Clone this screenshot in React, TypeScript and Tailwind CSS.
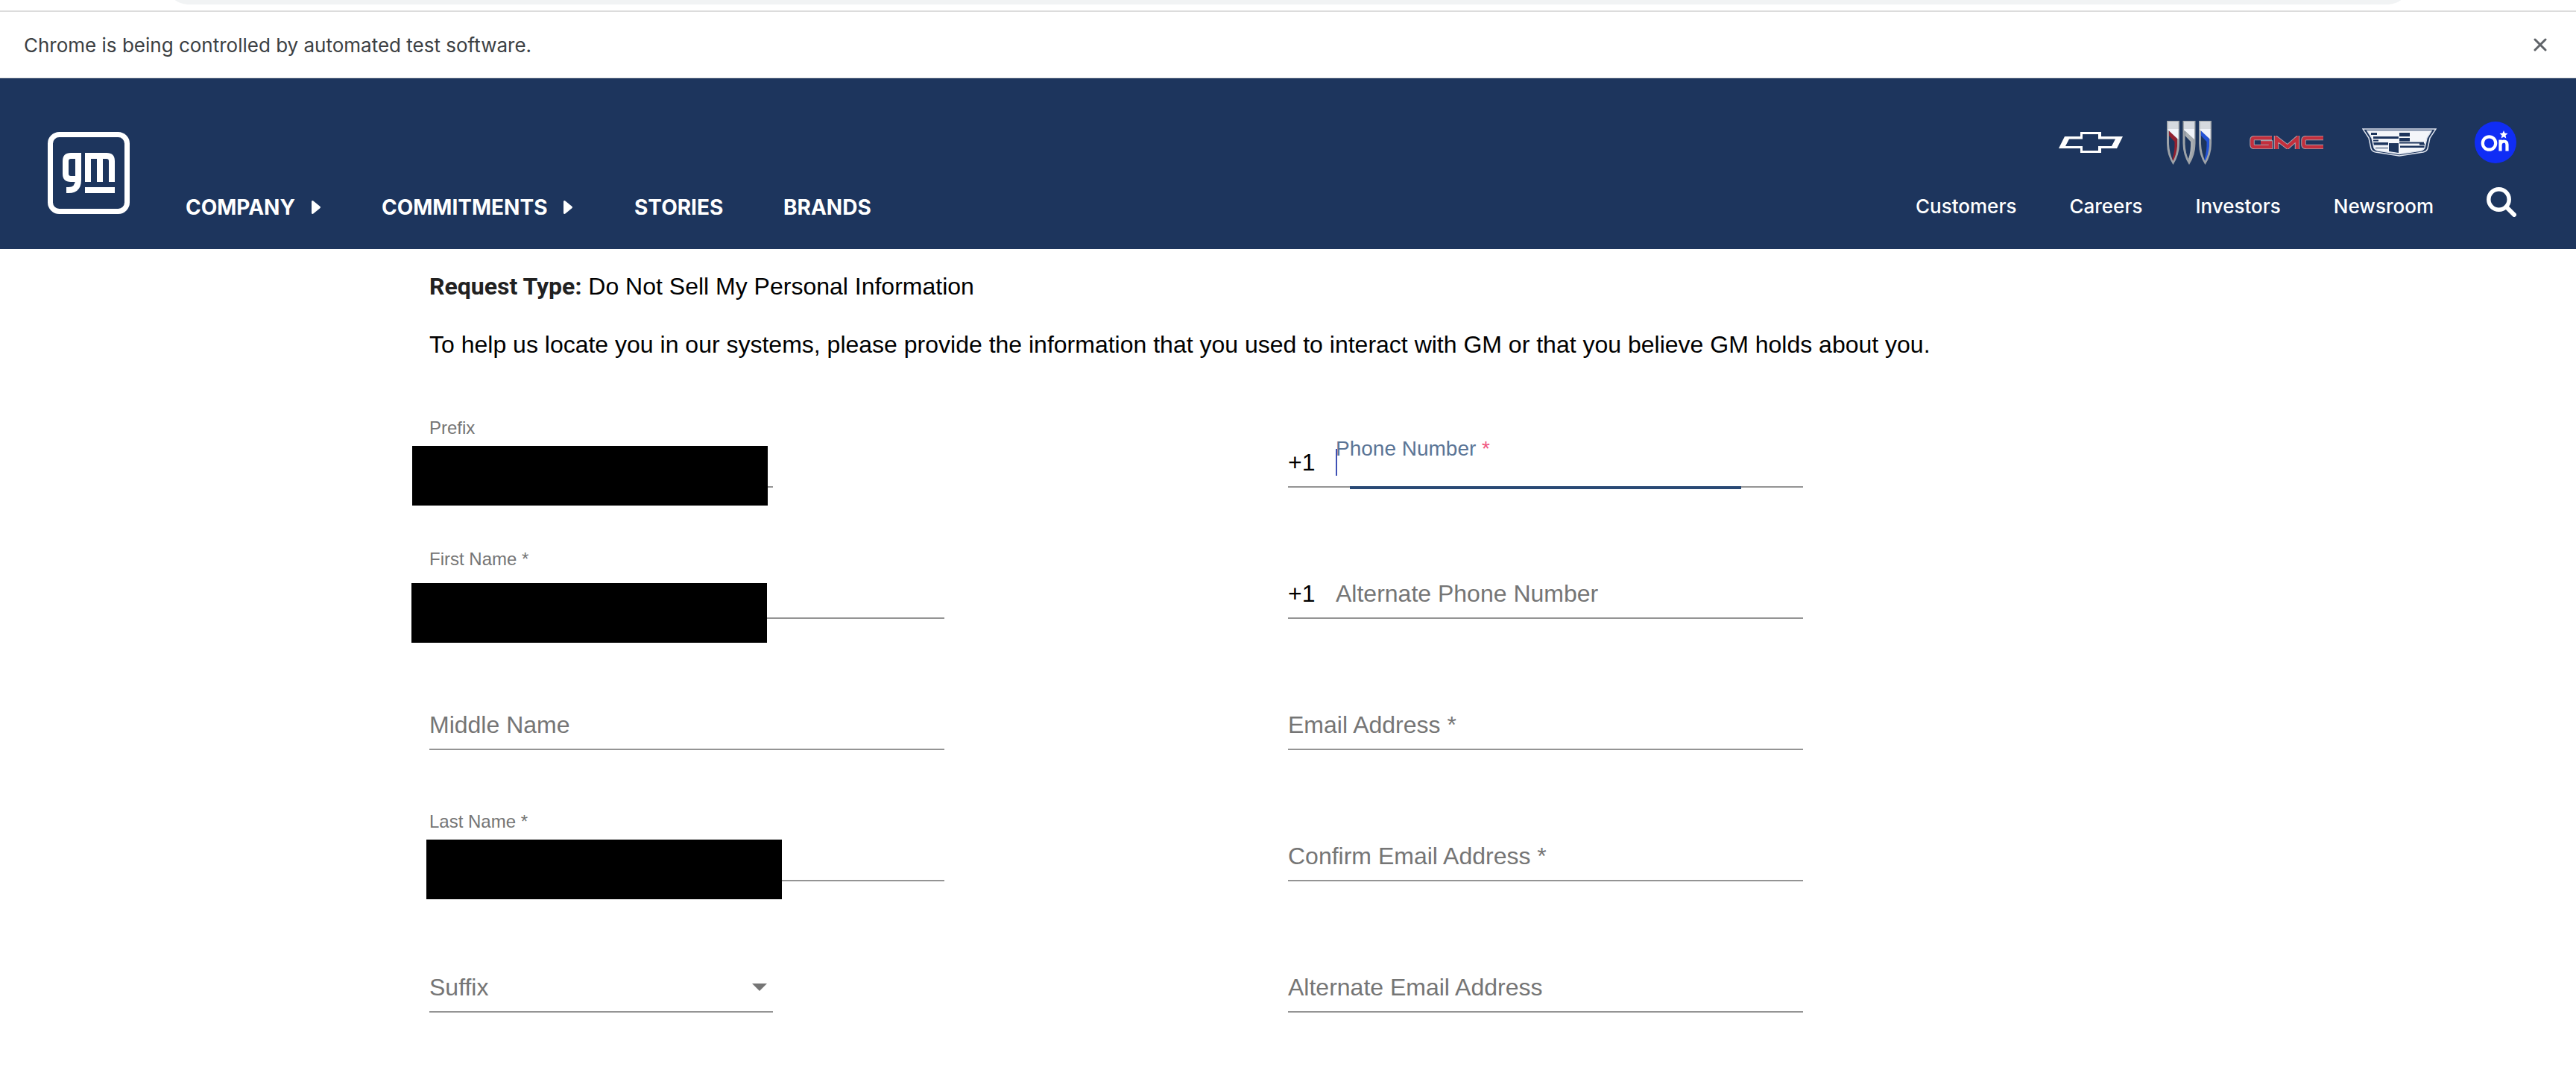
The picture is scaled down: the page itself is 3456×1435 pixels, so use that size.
import React from "react";

const brandNav = ["Customers", "Careers", "Investors", "Newsroom"];

function GmLogo() {
  return (
    <svg viewBox="0 0 110 110" className="h-[110px] w-[110px]" fill="none" stroke="#fff" aria-hidden="true">
      <rect x="3.5" y="3.5" width="103" height="103" rx="12" strokeWidth="7" />
      <path d="M45 32H31q-7 0-7 7V56q0 7 7 7H41" strokeWidth="8" />
      <path d="M41 28V64q0 14-13 14H25" strokeWidth="8" />
      <path d="M54 67V32H79q7 0 7 7V67M70 32V67" strokeWidth="8" />
      <path d="M50 78H90" strokeWidth="8" />
    </svg>
  );
}

function ChevroletLogo() {
  return (
    <svg viewBox="0 0 86 28" className="h-7 w-[86px]" aria-hidden="true">
      <path fill="#fff" fillRule="evenodd" d="M29 0H57V6H86L78 22H57V28H29V22H0L8 6H29ZM32 3V9.500H14L9 19H32V25H53V19H71L76 9.500H53V3Z" />
    </svg>
  );
}

function Shield({ x, color }: { x: number; color: string }) {
  return (
    <g transform={`translate(${x} 0)`}>
      <path d="M0 0H17V30Q17 46 8.500 59Q0 46 0 30Z" fill="#9ea3a8" />
      <path d="M1.500 1H15.500V12H1.500Z" fill="#d5d9df" />
      <path d="M1.500 11H15.500V25L2 13Z" fill="#f1f4fa" />
      <path d="M3 14L12 24V32Q12 44 8 53Q3.500 43 3 31Z" fill="#1d355d" />
      <path d="M3 13.500L14 24V34Q13 45 8.500 54L7.500 51Q11 41 10.500 28L3 20Z" fill={color} />
    </g>
  );
}

function BuickLogo() {
  return (
    <svg viewBox="0 0 60 59" className="h-[59px] w-[60px]" aria-hidden="true">
      <Shield x={0} color="#92202f" />
      <Shield x={21.5} color="#a9aeb2" />
      <Shield x={43} color="#2453d6" />
    </svg>
  );
}

function GmcLogo() {
  const d = "M30 3H7Q3.500 3 3.500 6V12Q3.500 15 7 15H28V9.500H15M36 18V3.500L51 15L64 3.500V18M99 3H77Q72.500 3 72.500 6V12Q72.500 15 77 15H99";
  return (
    <svg viewBox="0 0 100 18" className="h-[18px] w-[100px]" fill="none" aria-hidden="true">
      <path d={d} stroke="#a9a1ab" strokeWidth="6.500" />
      <path d={d} stroke="#c32f3d" strokeWidth="4.500" />
    </svg>
  );
}

function CadillacLogo() {
  return (
    <svg viewBox="0 0 100 38" className="h-[38px] w-[100px]" aria-hidden="true">
      <path d="M1 1H99L91 13L88 27Q87 31 82 32L50 37L18 32Q13 31 12 27L9 13Z" fill="#1d355d" stroke="#dfe4ee" strokeWidth="1.500" />
      <path d="M7 3.500H93L87 13L84 26Q83 29 79 30L50 34.500L21 30Q17 29 16 26L13 13Z" fill="#f4f6fa" />
      <g fill="#1d355d">
        <path d="M12 6H20V9H12ZM50 6H64V11H50ZM15 11H49V14H15ZM15 15.500H22V17.500H15ZM50 13H64V17.500H50Z" />
        <path d="M15 19H35V22.500H15ZM36 20H49V33L36 31ZM50 18.500H83V20.500H50ZM77 20.500H84V22.500H77ZM51 23.500H84V26H51ZM18 26H35V27H18Z" />
      </g>
      <path d="M7 3.500H93L87 13L84 26Q83 29 79 30L50 34.500L21 30Q17 29 16 26L13 13Z" fill="none" stroke="#dfe4ee" strokeWidth="1.500" />
    </svg>
  );
}

function OnStarLogo() {
  return (
    <svg viewBox="0 0 56 56" className="h-14 w-14" aria-hidden="true">
      <circle cx="28" cy="28" r="28" fill="#102df5" />
      <circle cx="19.500" cy="29" r="8.700" fill="none" stroke="#fff" strokeWidth="4.200" />
      <path d="M34.500 39.500V24.500M34.500 31Q35 26.500 39.300 26.500Q43.500 26.500 43.500 31V39.500" fill="none" stroke="#fff" strokeWidth="4.200" />
      <path d="M39 12L40.500 15.500L44.500 16L41.500 18.500L42.300 22.500L39 20.500L35.700 22.500L36.500 18.500L33.500 16L37.500 15.500Z" fill="#fff" />
    </svg>
  );
}

function Arrow() {
  return (
    <svg viewBox="0 0 12 18" className="h-[18px] w-3" aria-hidden="true">
      <path d="M0 1Q1-1 3 1L11 7.500Q13 9 11 10.500L3 17Q1 19 0 17Z" fill="#fff" />
    </svg>
  );
}

type FieldProps = {
  id: string;
  label: string;
  filled?: boolean;
  select?: boolean;
  prefix?: string;
  focused?: boolean;
  mask?: string;
};

function Field({ id, label, filled, select, prefix, focused, mask }: FieldProps) {
  const control = "h-full min-w-0 flex-1 appearance-none bg-transparent text-[32px] text-black outline-none";
  return (
    <div className={select ? "relative flex h-24 w-2/5 flex-col" : "relative flex h-24 w-3/5 flex-col"}>
      {filled && (
        <label htmlFor={id} className="pt-0.5 text-2xl leading-7 text-[#757575]">
          {label}
        </label>
      )}
      <div className="relative mt-auto flex h-16 items-end border-b-2 border-[#949494]">
        {prefix && <span className="w-16 pb-3.5 text-[32px] leading-9">{prefix}</span>}
        {select ? (
          <select id={id} className={control} defaultValue="">
            <option value="" />
          </select>
        ) : (
          <input id={id} type="text" className={control} />
        )}
        {!filled && !focused && (
          <label
            htmlFor={id}
            className={
              prefix
                ? "absolute bottom-3.5 left-16 text-[32px] leading-9 text-[#757575]"
                : "absolute bottom-3.5 left-0 text-[32px] leading-9 text-[#757575]"
            }
          >
            {label}
          </label>
        )}
        {focused && (
          <>
            <label htmlFor={id} className="absolute bottom-[34px] left-16 text-[28px] leading-8 text-[#5b7596]">
              {label} <span className="text-[#f0557f]">*</span>
            </label>
            <span className="absolute bottom-3.5 left-16 h-9 w-0.5 bg-[#3f51b5]" />
            <span className="absolute -bottom-1 left-[12%] h-1 w-[76%] bg-[#2a4a75]" />
          </>
        )}
        {select && !filled && (
          <svg viewBox="0 0 20 10" className="pointer-events-none absolute right-2 bottom-[27px] h-2.5 w-5" aria-hidden="true">
            <path d="M0 0H20L10 10Z" fill="#757575" />
          </svg>
        )}
      </div>
      {mask && <div className={mask} />}
    </div>
  );
}

export default function App() {
  return (
    <div className="min-h-screen bg-white font-['Liberation_Sans',Arial,sans-serif] text-black">
      <div className="flex h-4 flex-col border-b-2 border-[#dcdcdc]">
        <div className="flex h-1.5 items-end overflow-hidden px-[224px]">
          <div className="h-14 flex-1 rounded-full bg-[#f1f3f4]" />
        </div>
      </div>
      <div className="flex h-[89px] items-center justify-between border-b border-[#dcdcdc] pr-[39px] pl-8">
        <p className="font-['Inter',sans-serif] text-[26px] text-[#3c4043]">
          Chrome is being controlled by automated test software.
        </p>
        <button aria-label="Close">
          <svg viewBox="0 0 18 18" className="h-[18px] w-[18px]" stroke="#5f6368" strokeWidth="3" strokeLinecap="round" aria-hidden="true">
            <path d="M2 2L16 16M16 2L2 16" />
          </svg>
        </button>
      </div>
      <header className="flex h-[229px] justify-between bg-[#1d355d] px-16 pt-[56px] font-['Inter',sans-serif] text-white">
        <div className="flex items-start">
          <a href="#home" aria-label="General Motors" className="mt-4">
            <GmLogo />
          </a>
          <nav className="mt-[99px] ml-[75px] flex h-9 items-center text-[28px] font-bold">
            <a href="#company" className="flex w-[263px] items-center gap-[22px]">COMPANY <Arrow /></a>
            <a href="#commitments" className="flex w-[339px] items-center gap-[22px]">COMMITMENTS <Arrow /></a>
            <a href="#stories" className="w-[200px]">STORIES</a>
            <a href="#brands">BRANDS</a>
          </nav>
        </div>
        <div className="flex flex-col items-end pr-4">
          <div className="flex h-[60px] items-center gap-[51px]">
            <a href="#chevrolet" aria-label="Chevrolet" className="mr-2"><ChevroletLogo /></a>
            <a href="#buick" aria-label="Buick"><BuickLogo /></a>
            <a href="#gmc" aria-label="GMC"><GmcLogo /></a>
            <a href="#cadillac" aria-label="Cadillac"><CadillacLogo /></a>
            <a href="#onstar" aria-label="OnStar"><OnStarLogo /></a>
          </div>
          <nav className="mt-[30px] flex items-start gap-[71px] text-[26px] font-medium">
            {brandNav.map((n) => (
              <a key={n} href={`#${n}`} className="mt-2 leading-9">{n}</a>
            ))}
            <button aria-label="Search">
              <svg viewBox="0 0 40 40" className="h-10 w-10" fill="none" stroke="#fff" aria-hidden="true">
                <circle cx="16.500" cy="16.500" r="13.700" strokeWidth="5.500" />
                <path d="M27 27L37 37" strokeWidth="6" strokeLinecap="round" />
              </svg>
            </button>
          </nav>
        </div>
      </header>
      <main className="mx-auto w-2/3 pt-[30px] text-[32px] leading-10">
        <p>
          <strong className="font-['Roboto',sans-serif] font-bold text-[#212121]">Request Type:</strong> Do Not Sell My Personal Information
        </p>
        <p className="mt-[38px]">
          To help us locate you in our systems, please provide the information that you used to interact with GM or that you believe GM holds about you.
        </p>
        <form className="mt-19 grid grid-cols-2 gap-y-20">
          <Field id="prefix" label="Prefix" filled select mask="absolute -left-[23px] top-10 h-20 w-[477px] bg-black" />
          <Field id="phone" label="Phone Number" prefix="+1" focused />
          <Field id="first" label="First Name *" filled mask="absolute -left-6 top-12 h-20 w-[477px] bg-black" />
          <Field id="altphone" label="Alternate Phone Number" prefix="+1" />
          <Field id="middle" label="Middle Name" />
          <Field id="email" label="Email Address *" />
          <Field id="last" label="Last Name *" filled mask="absolute -left-1 top-10 h-20 w-[477px] bg-black" />
          <Field id="confirm" label="Confirm Email Address *" />
          <Field id="suffix" label="Suffix" select />
          <Field id="altemail" label="Alternate Email Address" />
        </form>
      </main>
    </div>
  );
}
